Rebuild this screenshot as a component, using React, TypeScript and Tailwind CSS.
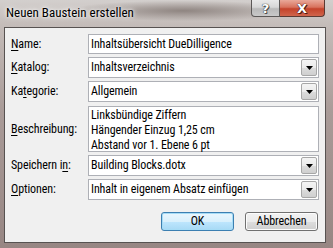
import React from "react";

const rows = [
  { label: "Name:", key: 0, value: "Inhaltsübersicht DueDilligence", combo: false },
  { label: "Katalog:", key: 0, value: "Inhaltsverzeichnis", combo: true },
  { label: "Kategorie:", key: 2, value: "Allgemein", combo: true },
];

function Label({ text, k }: { text: string; k: number }) {
  return (
    <span className="w-[77px] shrink-0 whitespace-nowrap">
      {text.slice(0, k)}
      <span className="underline underline-offset-2">{text[k]}</span>
      {text.slice(k + 1)}
    </span>
  );
}

function Arrow() {
  return (
    <span className="ml-auto mr-[1px] w-[16px] self-stretch my-[1px] flex items-center justify-center border border-[#a7a7a7] rounded-[2px] bg-[linear-gradient(180deg,#f4f4f4_0%,#ebebeb_50%,#dcdcdc_51%,#cfcfcf_100%)]">
      <svg width="7" height="4" viewBox="0 0 7 4">
        <path d="M0 0H7L3.5 4Z" fill="#000" />
      </svg>
    </span>
  );
}

function Field({ value, combo, h }: { value: string; combo: boolean; h: string }) {
  return (
    <div className={`w-[231px] ${h} flex items-center bg-white border border-[#aeb0b6] pl-[2px]`}>
      <span>{value}</span>
      {combo && <Arrow />}
    </div>
  );
}

export default function App() {
  return (
    <div className="w-[333px] h-[248px] overflow-hidden flex flex-col font-['Roboto_Condensed',sans-serif] text-[12px] tracking-[-0.1px] leading-[15px] text-black bg-[linear-gradient(180deg,#d3cfcd_0%,#c4bcb9_10%,#a99b98_45%,#978683_100%)]">
      <div className="h-[27px] shrink-0 flex items-start bg-[radial-gradient(ellipse_at_55%_40%,#8f8581_0%,rgba(150,140,136,0)_45%)]">
        <span className="pl-[6px] pt-[5px] text-[13px] tracking-normal [text-shadow:0_0_6px_#fff,0_0_3px_#fff]">
          Neuen Baustein erstellen
        </span>
        <div className="ml-auto mr-[8px] flex">
          <div className="w-[29px] h-[17px] flex items-center justify-center border border-t-0 border-[#5b5857] rounded-bl-[4px] bg-[linear-gradient(180deg,#e9e9e9_0%,#d7d7d7_45%,#b9b9b9_55%,#c9c9c9_100%)]">
            <span className="text-white font-bold text-[13px] font-['DejaVu_Sans',sans-serif] [text-shadow:0_0_1px_#333,0_0_1px_#333,1px_1px_0_#555]">?</span>
          </div>
          <div className="w-[45px] h-[17px] flex items-center justify-center border border-t-0 border-l-0 border-[#5b3a33] rounded-br-[4px] bg-[linear-gradient(180deg,#e9a899_0%,#d8725d_45%,#c4432b_55%,#d0654c_100%)]">
            <span className="text-white font-bold text-[13px] font-['DejaVu_Sans',sans-serif] [text-shadow:0_0_1px_#3a0d05,0_0_1px_#3a0d05,1px_1px_0_#5a1a10]">X</span>
          </div>
        </div>
      </div>

      <div className="ml-[4px] w-[322px] h-[216px] shrink-0 bg-[#f0f0f0] border border-[#575251] flex flex-col pt-[6px] pl-[6px]">
        <div className="flex flex-col gap-[3px]">
          <div className="flex items-center">
            <Label text={rows[0].label} k={rows[0].key} />
            <Field value={rows[0].value} combo={false} h="h-[20px]" />
          </div>
          {rows.slice(1).map((r) => (
            <div key={r.label} className="flex items-center">
              <Label text={r.label} k={r.key} />
              <Field value={r.value} combo={r.combo} h="h-[21px]" />
            </div>
          ))}
          <div className="flex items-center mt-[1px]">
            <Label text="Beschreibung:" k={0} />
            <div className="w-[231px] h-[46px] bg-white border border-[#aeb0b6] pl-[2px] pt-[1px]">
              <div>Linksbündige Ziffern</div>
              <div>Hängender Einzug 1,25 cm</div>
              <div>Abstand vor 1. Ebene 6 pt</div>
            </div>
          </div>
          <div className="flex items-center">
            <Label text="Speichern in:" k={11} />
            <Field value="Building Blocks.dotx" combo h="h-[21px]" />
          </div>
          <div className="flex items-center">
            <Label text="Optionen:" k={0} />
            <Field value="Inhalt in eigenem Absatz einfügen" combo h="h-[21px]" />
          </div>
        </div>

        <div className="flex gap-[11px] pl-[150px] mt-[12px]">
          <button className="w-[73px] h-[19px] rounded-[3px] border border-[#3c7fb1] shadow-[inset_0_0_0_1px_#a6dcf6] bg-[linear-gradient(180deg,#eaf6fd_0%,#d9f0fc_50%,#bee6fd_51%,#a7d9f5_100%)]">
            OK
          </button>
          <button className="w-[73px] h-[19px] rounded-[3px] border border-[#707070] shadow-[inset_0_0_0_1px_#fcfcfc] bg-[linear-gradient(180deg,#f2f2f2_0%,#ebebeb_50%,#dddddd_51%,#cfcfcf_100%)]">
            Abbrechen
          </button>
        </div>
      </div>
    </div>
  );
}
